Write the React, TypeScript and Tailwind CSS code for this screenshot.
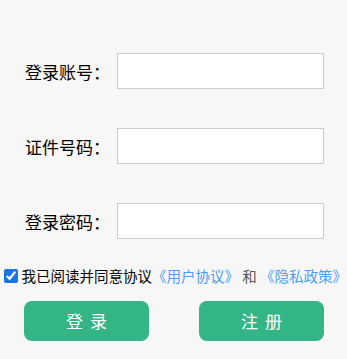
import React, { useState } from 'react';

const fields = ['登录账号：', '证件号码：', '登录密码：'];

const App = () => {
  const [agreed, setAgreed] = useState(true);

  return (
    <div
      className="min-h-screen w-full bg-[#f7f7f7] text-black"
      style={{ fontFamily: '"Noto Sans CJK SC", "Noto Sans", sans-serif' }}
    >
      <div className="flex flex-col gap-[39px] pt-[53px]">
        {fields.map((label, i) => (
          <div key={label} className="flex items-center">
            <label className="w-[117px] pl-[25px] shrink-0 text-[17px] leading-none whitespace-nowrap">{label}</label>
            <input
              type={i === 2 ? 'password' : 'text'}
              className="w-[207px] h-[36px] bg-white border border-[#cccccc] outline-none px-2 text-[15px]"
            />
          </div>
        ))}
      </div>

      <div className="flex items-center mt-[29px] pl-[4px] h-[16px] whitespace-nowrap">
        <input
          type="checkbox"
          checked={agreed}
          onChange={() => setAgreed(!agreed)}
          className="w-[16px] h-[16px] m-0 accent-[#1a73e8]"
        />
        <span className="ml-[4px] text-[14.5px] leading-none">
          我已阅读并同意协议
          <a className="text-[#4a9ff5]">《用户协议》</a>
          <span className="text-[#555555]"> 和 </span>
          <a className="text-[#4a9ff5]">《隐私政策》</a>
        </span>
      </div>

      <div className="flex gap-[50px] pl-[24px] mt-[17px]">
        <button className="w-[125px] h-[40px] rounded-[8px] bg-[#33b585] text-white text-[17px] tracking-[7px] pl-[7px]">
          登录
        </button>
        <button className="w-[125px] h-[40px] rounded-[8px] bg-[#33b585] text-white text-[17px] tracking-[7px] pl-[7px]">
          注册
        </button>
      </div>
    </div>
  );
};

export default App;
